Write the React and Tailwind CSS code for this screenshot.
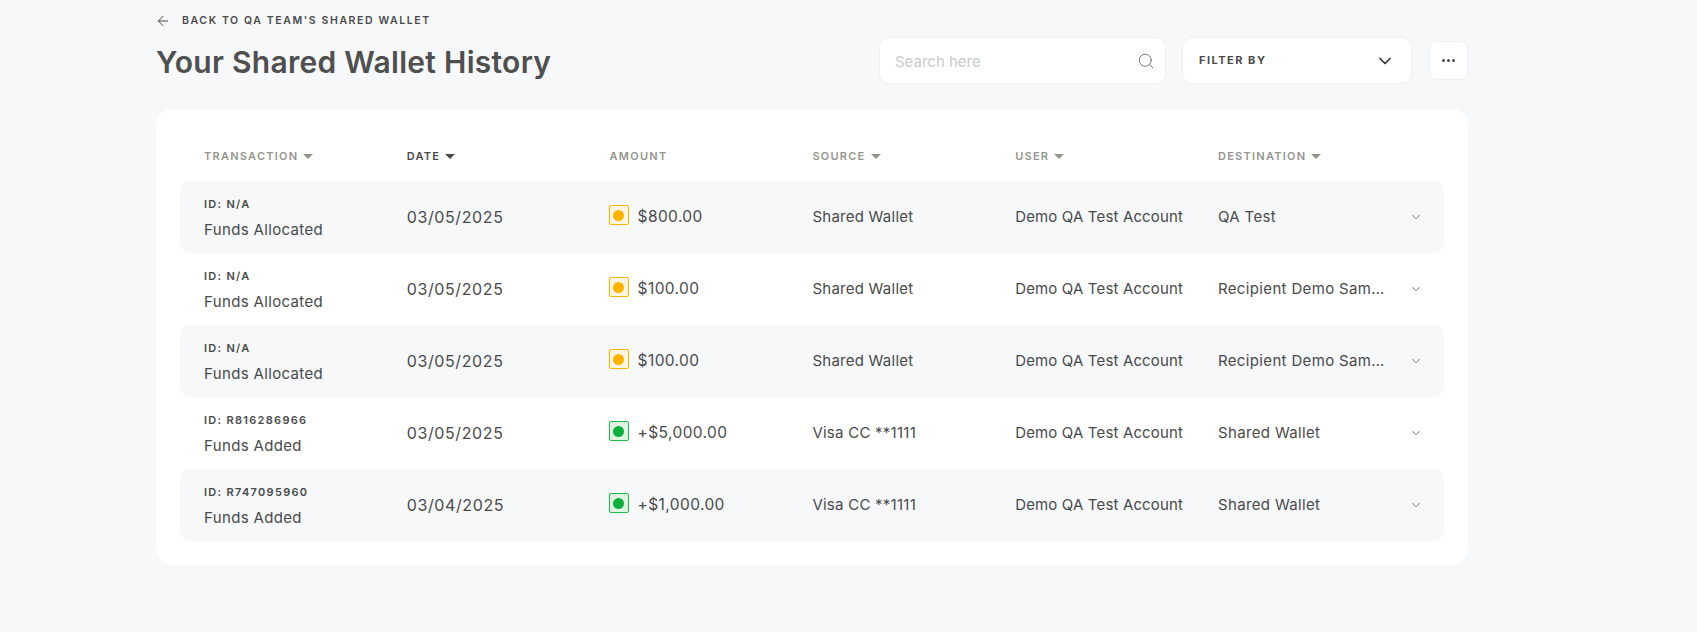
import { ArrowLeft, ChevronDown, Search } from 'lucide-react';

const rows = [
  { id: 'N/A', type: 'Funds Allocated', date: '03/05/2025', amount: '$800.00', status: 'pending', source: 'Shared Wallet', dest: 'QA Test' },
  { id: 'N/A', type: 'Funds Allocated', date: '03/05/2025', amount: '$100.00', status: 'pending', source: 'Shared Wallet', dest: 'Recipient Demo Sample Account' },
  { id: 'N/A', type: 'Funds Allocated', date: '03/05/2025', amount: '$100.00', status: 'pending', source: 'Shared Wallet', dest: 'Recipient Demo Sample Account' },
  { id: 'R816286966', type: 'Funds Added', date: '03/05/2025', amount: '+$5,000.00', status: 'done', source: 'Visa CC **1111', dest: 'Shared Wallet' },
  { id: 'R747095960', type: 'Funds Added', date: '03/04/2025', amount: '+$1,000.00', status: 'done', source: 'Visa CC **1111', dest: 'Shared Wallet' },
];

const columns = [
  { label: 'TRANSACTION', caret: true },
  { label: 'DATE', caret: true, active: true },
  { label: 'AMOUNT' },
  { label: 'SOURCE', caret: true },
  { label: 'USER', caret: true },
  { label: 'DESTINATION', caret: true },
];

function Caret({ className = '' }) {
  return <span className={`ml-[5px] h-0 w-0 border-x-[5px] border-t-[5px] border-x-transparent ${className}`} />;
}

function StatusIcon({ status }) {
  if (status === 'done') {
    return (
      <span className="mb-[4px] -ml-[1px] flex h-5 w-5 items-center justify-center rounded-[2px] border border-[#22b84a] bg-[#dff3e3]">
        <span className="h-[11px] w-[11px] rounded-full bg-[#0fae3d]" />
      </span>
    );
  }
  return (
    <span className="mb-[4px] -ml-[1px] flex h-5 w-5 items-center justify-center rounded-[2px] border border-[#ffb300] bg-[#fdf5df]">
      <span className="h-[11px] w-[11px] rounded-full bg-[#ffb300]" />
    </span>
  );
}

export default function App() {
  return (
    <div className="h-[632px] overflow-hidden bg-[#f6f8fa] pl-[156px] font-['Inter',sans-serif] text-[#4a4a4a]">
      <div className="w-[1312px]">
        <div className="flex h-[109px] items-start justify-between">
          <div>
            <div className="mt-[13px] flex h-[16px] items-center">
              <ArrowLeft size={16} strokeWidth={1.5} className="mr-[11px] -ml-[1px] text-[#4a4a4a]" />
              <span className="text-[10.5px] font-semibold tracking-[1.6px]">BACK TO QA TEAM'S SHARED WALLET</span>
            </div>
            <h1 className="mt-[13px] text-[30px] font-semibold leading-[40px] tracking-[0.28px] text-[#4f4f4f]">Your Shared Wallet History</h1>
          </div>
          <div className="mt-[37px] flex items-center">
            <div className="flex h-[47px] w-[287px] items-center justify-between rounded-[10px] border border-[#eef0f2] bg-white pl-[15px] pr-[10px]">
              <span className="mt-[3px] text-[15px] text-[#c8cbcd]">Search here</span>
              <Search size={18} strokeWidth={1.25} className="text-[#6f6f6f]" />
            </div>
            <div className="ml-[16px] flex h-[47px] w-[230px] items-center justify-between rounded-[10px] border border-[#eef0f2] bg-white pl-[16px] pr-[16px]">
              <span className="text-[11px] font-bold tracking-[1.5px]">FILTER BY</span>
              <ChevronDown size={20} strokeWidth={2} className="text-[#333333]" />
            </div>
            <div className="ml-[17px] flex h-[39px] w-[39px] items-center justify-center gap-[2px] rounded-[8px] border border-[#eef0f2] bg-white">
              <span className="h-[3px] w-[3px] rounded-full bg-[#4a4a4a]" />
              <span className="h-[3px] w-[3px] rounded-full bg-[#4a4a4a]" />
              <span className="h-[3px] w-[3px] rounded-full bg-[#4a4a4a]" />
            </div>
          </div>
        </div>

        <div className="h-[456px] rounded-[16px] bg-white px-[24px]">
          <div className="flex h-[72px] items-center pl-[24px] pt-[22px]">
            {columns.map((c) => (
              <div key={c.label} className="flex w-[202.8px] shrink-0 items-center">
                <span className={`text-[11px] font-semibold tracking-[1.25px] ${c.active ? 'text-[#4a4a4a]' : 'text-[#94968f]'}`}>{c.label}</span>
                {c.caret && <Caret className={c.active ? 'border-t-[#4a4a4a]' : 'border-t-[#94968f]'} />}
              </div>
            ))}
          </div>
          {rows.map((r, i) => (
            <div key={i} className={`flex h-[72px] items-center rounded-[10px] pl-[24px] ${i % 2 === 0 ? 'bg-[#f6f8fa]' : 'bg-white'}`}>
              <div className="w-[202.8px] shrink-0 pt-[2px]">
                <div className="text-[11px] font-semibold leading-[14px] tracking-[1.3px]">ID: {r.id}</div>
                <div className="mt-[9px] text-[15px] leading-[20px] tracking-[0.35px]">{r.type}</div>
              </div>
              <div className="w-[202.8px] shrink-0 text-[16px] tracking-[0.6px]">{r.date}</div>
              <div className="flex w-[202.8px] shrink-0 items-center">
                <StatusIcon status={r.status} />
                <span className="ml-[9px] text-[15.5px] tracking-[0.4px]">{r.amount}</span>
              </div>
              <div className="w-[202.8px] shrink-0 text-[15px] tracking-[0.25px]">{r.source}</div>
              <div className="w-[202.8px] shrink-0 text-[15px] tracking-[0.15px]">Demo QA Test Account</div>
              <div className="w-[172px] shrink-0 truncate text-[15px] tracking-[0.35px]">{r.dest}</div>
              <ChevronDown size={14} strokeWidth={1.5} className="ml-[19px] shrink-0 text-[#6f6f6f]" />
            </div>
          ))}
        </div>
      </div>
    </div>
  );
}
